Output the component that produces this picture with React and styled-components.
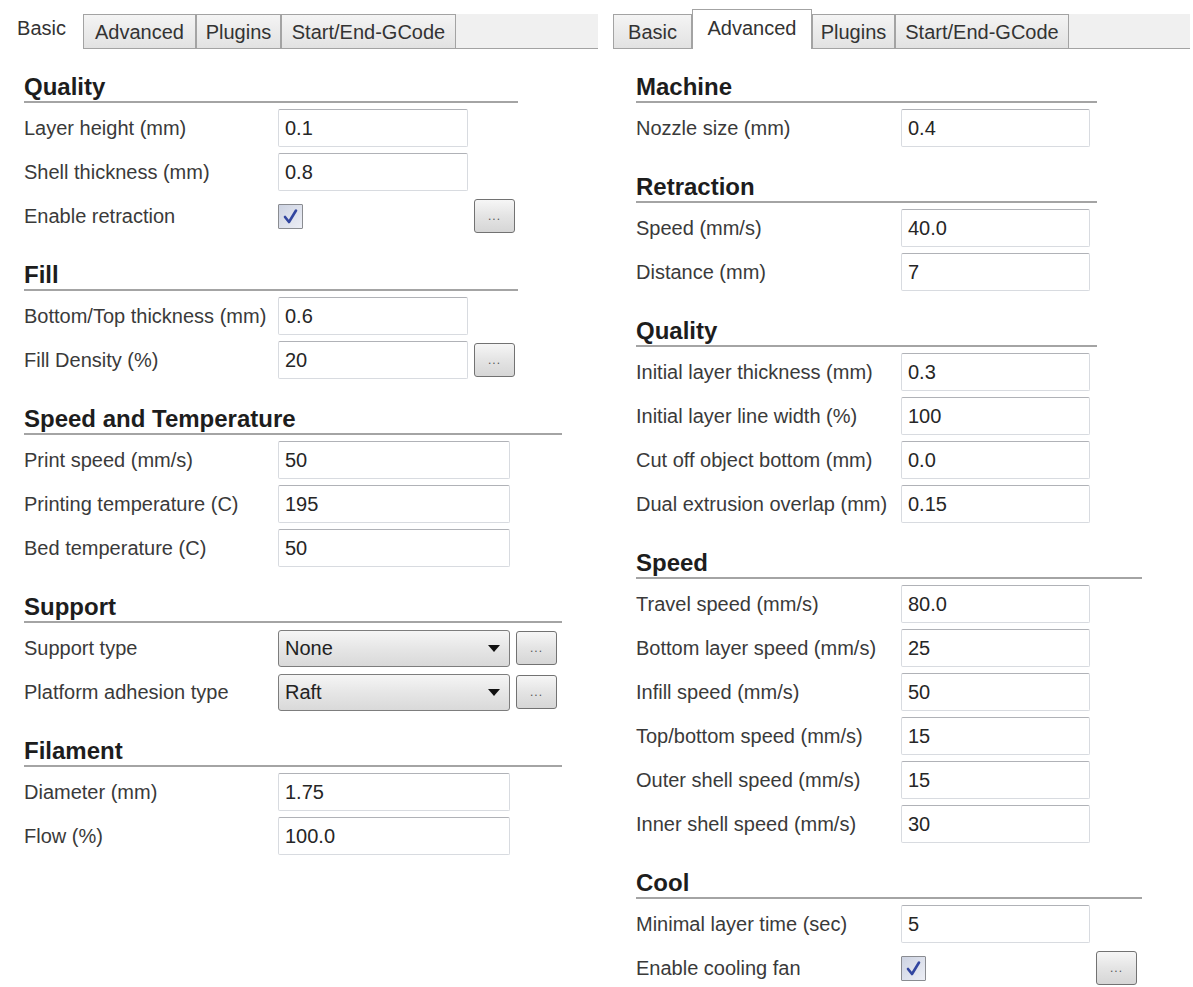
import React from 'react';
import styled, { createGlobalStyle } from 'styled-components';

const GlobalStyle = createGlobalStyle`
  body {
    margin: 0;
    background: #fff;
    font-family: "Liberation Sans", Arial, sans-serif;
  }
`;

const Page = styled.div`
  display: flex;
  width: 1193px;
  height: 987px;
  overflow: hidden;
  background: #fff;
  color: #353535;
  font-size: 20px;
`;

const Panel = styled.div`
  flex: none;
  width: ${p => p.$w}px;
`;

const TabStrip = styled.div`
  display: flex;
  align-items: flex-end;
  height: 49px;
  width: ${p => p.$w}px;
  margin-left: ${p => p.$inset}px;
`;

const Tab = styled.div`
  box-sizing: border-box;
  flex: none;
  display: flex;
  justify-content: center;
  width: ${p => p.$w}px;
  height: ${p => (p.$active ? 40 : 35)}px;
  padding-top: ${p => (p.$active ? 6 : 5)}px;
  line-height: 24px;
  white-space: nowrap;
  color: #333;
  background: ${p => (p.$active ? '#fff' : 'linear-gradient(#f4f4f4, #e2e2e2)')};
  border: 1px solid ${p => (p.$bare ? 'transparent' : '#a3a3a3')};
  border-bottom: ${p => (p.$active ? 'none' : '1px solid #a3a3a3')};
`;

const StripRest = styled.div`
  flex: 1;
  height: 35px;
  box-sizing: border-box;
  background: #f0f0f0;
  border-bottom: 1px solid #a3a3a3;
`;

const Body = styled.div`
  padding-left: ${p => p.$pad}px;
`;

const Section = styled.section`
  width: ${p => p.$w}px;
  margin-top: 26px;
  &:first-child {
    margin-top: 24px;
  }
`;

const Heading = styled.h3`
  margin: 0 0 6px;
  font-size: 24px;
  line-height: 28px;
  font-weight: bold;
  color: #1d1d1d;
  border-bottom: 2px solid #a4a4a4;
`;

const Rows = styled.div`
  display: grid;
  grid-template-columns: ${p => p.$label}px ${p => p.$input}px 41px;
  grid-auto-rows: 38px;
  row-gap: 6px;
  column-gap: 6px;
  align-items: center;
`;

const Label = styled.span`
  white-space: nowrap;
  color: #3a3a3a;
  margin-right: -6px;
`;

const TextBox = styled.div`
  box-sizing: border-box;
  height: 38px;
  display: flex;
  align-items: center;
  padding-left: 6px;
  background: #fff;
  border: 1px solid #d8dbe0;
  border-top-color: #b0b2b7;
  border-radius: 2px;
  color: #262626;
`;

const Combo = styled.div`
  box-sizing: border-box;
  height: 37px;
  display: flex;
  align-items: center;
  justify-content: space-between;
  padding: 0 9px 0 6px;
  border: 1px solid #7d7d7d;
  border-radius: 3px;
  background: linear-gradient(#f5f5f5, #e6e6e6 50%, #d9d9d9);
  color: #222;
`;

const Arrow = styled.span`
  width: 0;
  height: 0;
  border-left: 6px solid transparent;
  border-right: 6px solid transparent;
  border-top: 7px solid #111;
`;

const Check = styled.div`
  box-sizing: border-box;
  width: 25px;
  height: 25px;
  border: 1px solid #8a8c91;
  border-radius: 1px;
  background: linear-gradient(135deg, #cdd3e2, #eceef5);
  display: flex;
  align-items: center;
  justify-content: center;
`;

const DotsButton = styled.div`
  box-sizing: border-box;
  height: 34px;
  display: flex;
  align-items: center;
  justify-content: center;
  border: 1px solid #727272;
  border-radius: 3px;
  background: linear-gradient(#f6f6f6, #e4e4e4 50%, #d6d6d6);
  font-size: 12px;
  letter-spacing: 1px;
  color: #555;
`;

function CheckBox() {
  return (
    <Check>
      <svg width="19" height="19" viewBox="0 0 19 19">
        <path d="M4 10 L8 15 L15 3.5" fill="none" stroke="#3246a0" strokeWidth="2.6" strokeLinecap="round" strokeLinejoin="round" />
      </svg>
    </Check>
  );
}

function Field({ item }) {
  if (item.check) return <div><CheckBox /></div>;
  if (item.combo) return <Combo>{item.combo}<Arrow /></Combo>;
  return <TextBox>{item.value}</TextBox>;
}

function Group({ title, label, input, line, items }) {
  return (
    <Section $w={line}>
      <Heading>{title}</Heading>
      <Rows $label={label} $input={input}>
        {items.map(item => (
          <React.Fragment key={item.label}>
            <Label>{item.label}</Label>
            <Field item={item} />
            {item.more ? <DotsButton>...</DotsButton> : <span />}
          </React.Fragment>
        ))}
      </Rows>
    </Section>
  );
}

const basic = [
  { title: 'Quality', input: 190, line: 494, items: [
    { label: 'Layer height (mm)', value: '0.1' },
    { label: 'Shell thickness (mm)', value: '0.8' },
    { label: 'Enable retraction', check: true, more: true },
  ] },
  { title: 'Fill', input: 190, line: 494, items: [
    { label: 'Bottom/Top thickness (mm)', value: '0.6' },
    { label: 'Fill Density (%)', value: '20', more: true },
  ] },
  { title: 'Speed and Temperature', input: 232, line: 538, items: [
    { label: 'Print speed (mm/s)', value: '50' },
    { label: 'Printing temperature (C)', value: '195' },
    { label: 'Bed temperature (C)', value: '50' },
  ] },
  { title: 'Support', input: 232, line: 538, items: [
    { label: 'Support type', combo: 'None', more: true },
    { label: 'Platform adhesion type', combo: 'Raft', more: true },
  ] },
  { title: 'Filament', input: 232, line: 538, items: [
    { label: 'Diameter (mm)', value: '1.75' },
    { label: 'Flow (%)', value: '100.0' },
  ] },
];

const advanced = [
  { title: 'Machine', input: 189, line: 461, items: [
    { label: 'Nozzle size (mm)', value: '0.4' },
  ] },
  { title: 'Retraction', input: 189, line: 461, items: [
    { label: 'Speed (mm/s)', value: '40.0' },
    { label: 'Distance (mm)', value: '7' },
  ] },
  { title: 'Quality', input: 189, line: 461, items: [
    { label: 'Initial layer thickness (mm)', value: '0.3' },
    { label: 'Initial layer line width (%)', value: '100' },
    { label: 'Cut off object bottom (mm)', value: '0.0' },
    { label: 'Dual extrusion overlap (mm)', value: '0.15' },
  ] },
  { title: 'Speed', input: 189, line: 506, items: [
    { label: 'Travel speed (mm/s)', value: '80.0' },
    { label: 'Bottom layer speed (mm/s)', value: '25' },
    { label: 'Infill speed (mm/s)', value: '50' },
    { label: 'Top/bottom speed (mm/s)', value: '15' },
    { label: 'Outer shell speed (mm/s)', value: '15' },
    { label: 'Inner shell speed (mm/s)', value: '30' },
  ] },
  { title: 'Cool', input: 189, line: 506, items: [
    { label: 'Minimal layer time (sec)', value: '5' },
    { label: 'Enable cooling fan', check: true, more: true },
  ] },
];

function App() {
  return (
    <Page>
      <GlobalStyle />
      <Panel $w={600}>
        <TabStrip $w={598} $inset={0}>
          <Tab $w={83} $bare $active>Basic</Tab>
          <Tab $w={113}>Advanced</Tab>
          <Tab $w={85}>Plugins</Tab>
          <Tab $w={175}>Start/End-GCode</Tab>
          <StripRest />
        </TabStrip>
        <Body $pad={24}>
          {basic.map(g => (
            <Group key={g.title} label={248} {...g} />
          ))}
        </Body>
      </Panel>
      <Panel $w={593}>
        <TabStrip $w={577} $inset={13}>
          <Tab $w={79}>Basic</Tab>
          <Tab $w={120} $active>Advanced</Tab>
          <Tab $w={83}>Plugins</Tab>
          <Tab $w={174}>Start/End-GCode</Tab>
          <StripRest />
        </TabStrip>
        <Body $pad={36}>
          {advanced.map(g => (
            <Group key={g.title} label={259} {...g} />
          ))}
        </Body>
      </Panel>
    </Page>
  );
}

export default App;
